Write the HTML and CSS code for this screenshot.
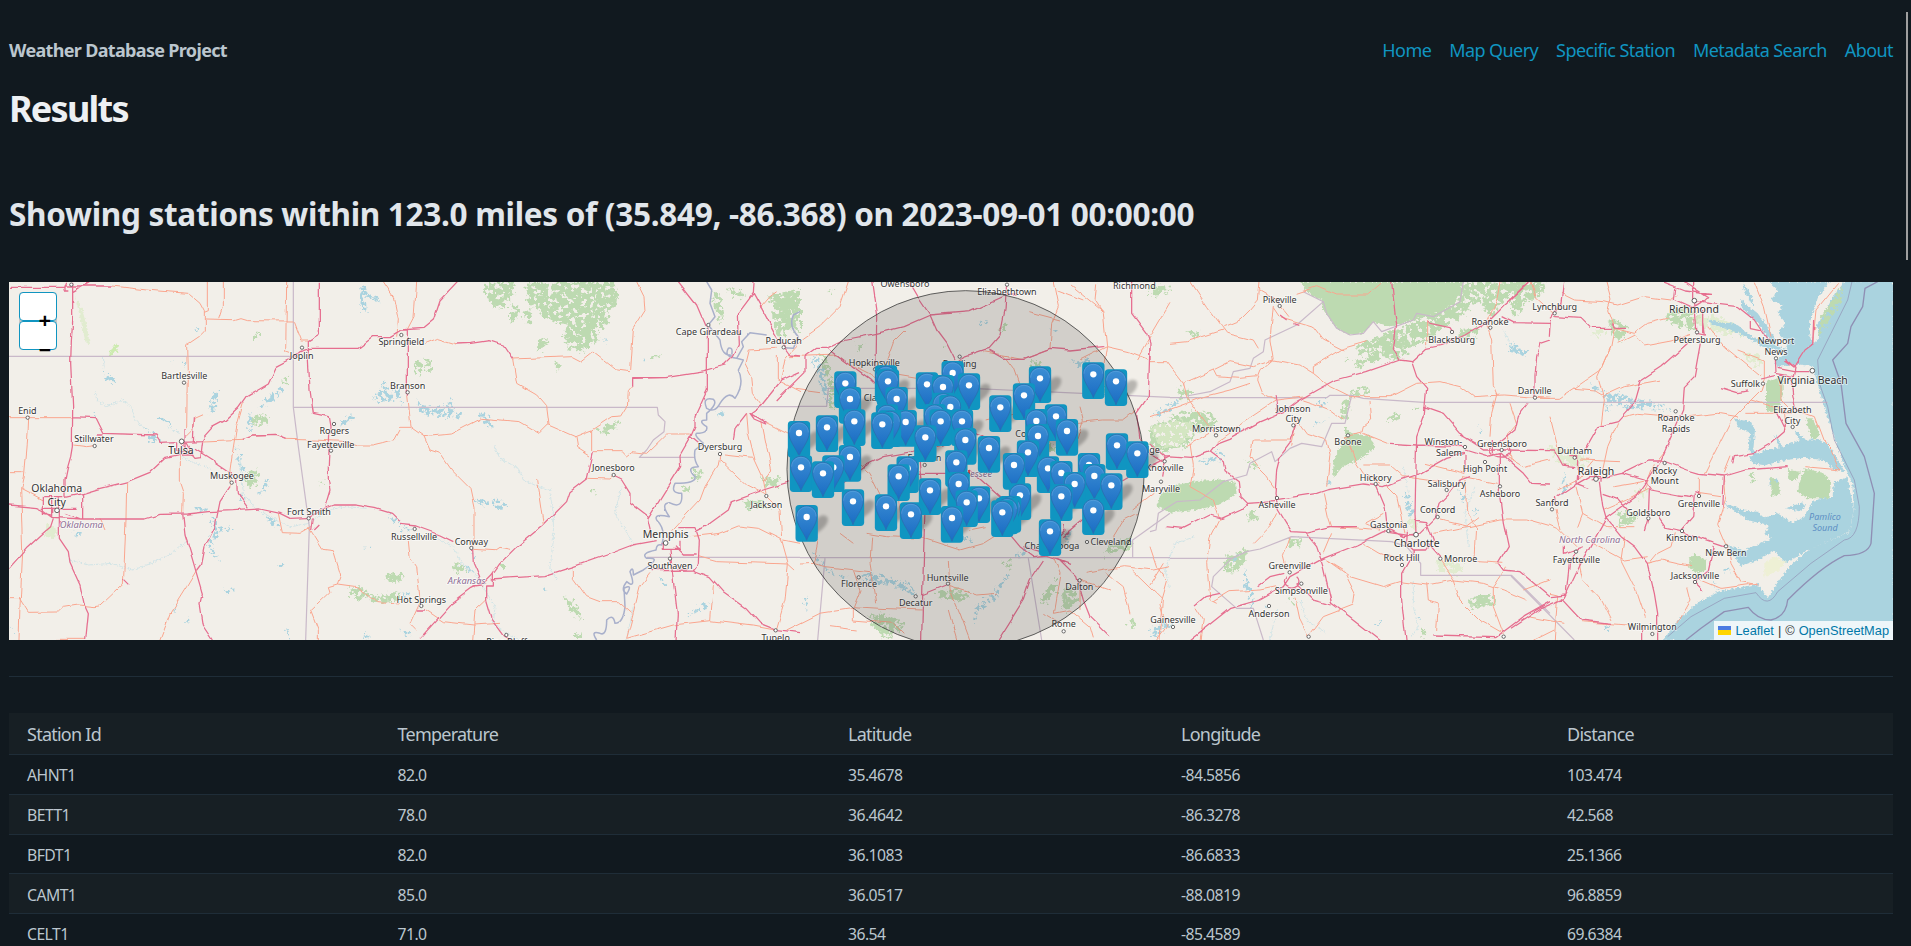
FILE: index.html
```html
<!DOCTYPE html>
<html lang="en">
<head>
<meta charset="utf-8">
<title>Weather Database Project</title>
<link rel="stylesheet" href="styles.css">
</head>
<body>
<nav class="nav">
  <strong class="brand">Weather Database Project</strong>
  <ul class="links">
    <li><a href="#">Home</a></li><li><a href="#">Map Query</a></li><li><a href="#">Specific Station</a></li><li><a href="#">Metadata Search</a></li><li><a href="#">About</a></li>
  </ul>
</nav>
<h1 class="title">Results</h1>
<h2 class="subtitle">Showing stations within 123.0 miles of (35.849, -86.368) on 2023-09-01 00:00:00</h2>
<div class="map">
<svg class="tiles" viewBox="9 282 1884 358" width="1884" height="358">
<defs>
  <filter id="rag" x="-5%" y="-5%" width="110%" height="110%"><feTurbulence type="fractalNoise" baseFrequency="0.13" numOctaves="3" seed="4"/><feDisplacementMap in="SourceGraphic" scale="15" xChannelSelector="R" yChannelSelector="G"/></filter>
  <filter id="veg" x="-5%" y="-5%" width="110%" height="110%"><feTurbulence type="fractalNoise" baseFrequency="0.07" numOctaves="4" seed="4" result="n"/><feDisplacementMap in="SourceGraphic" in2="n" scale="34" xChannelSelector="R" yChannelSelector="G" result="d"/><feColorMatrix in="n" values="0 0 0 0 0  0 0 0 0 0  0 0 0 0 0  0 0 14 0 -5.1"/><feComposite in="d" operator="in"/></filter>
  <filter id="lake" x="-5%" y="-5%" width="110%" height="110%"><feTurbulence type="fractalNoise" baseFrequency="0.09" numOctaves="3" seed="12" result="n"/><feDisplacementMap in="SourceGraphic" in2="n" scale="26" xChannelSelector="R" yChannelSelector="G" result="d"/><feColorMatrix in="n" values="0 0 0 0 0  0 0 0 0 0  0 0 0 0 0  0 0 12 0 -5.3"/><feComposite in="d" operator="in"/></filter>
  <filter id="wig" x="-5%" y="-5%" width="110%" height="110%"><feTurbulence type="fractalNoise" baseFrequency="0.06" numOctaves="2" seed="9"/><feDisplacementMap in="SourceGraphic" scale="5" xChannelSelector="R" yChannelSelector="G"/></filter>
  <filter id="blur"><feGaussianBlur stdDeviation="5"/></filter>
  <linearGradient id="pinfill" x1="0" y1="0" x2="0" y2="1"><stop offset="0" stop-color="#3d8fd4"/><stop offset="1" stop-color="#1a6cc4"/></linearGradient>
  <g id="s"><path d="M0,70 L22,15 Q45,-15 62,0 Q70,20 40,42 Z" fill="#000" opacity=".24" filter="url(#blur)"/></g>
  <g id="p"><rect x="-33.5" y="-36" width="67" height="110" rx="11" fill="#1095c1"/><path d="M0,70 C-5,52 -31,22 -31,-1 C-31,-20 -17,-33 0,-33 C17,-33 31,-20 31,-1 C31,22 5,52 0,70 Z" fill="url(#pinfill)" stroke="#2a6fb0" stroke-width="2.5"/><path d="M-28,-2 C-28,-19 -15,-30 0,-30 C15,-30 28,-19 28,-2" fill="none" stroke="#6fb2e4" stroke-opacity=".6" stroke-width="2"/><circle r="9.5" fill="#fff"/></g>
  <circle id="t" r="5" fill="#fff" stroke="#555" stroke-width="2.6"/>
  <circle id="c" r="7" fill="#fff" stroke="#555" stroke-width="2.8"/>
</defs>
<rect x="9" y="282" width="1884" height="358" fill="#f2efe9"/>

<!-- Land cover and lakes -->
<g transform="translate(0 280) scale(.33333)">
  <g class="green" filter="url(#veg)"><path d="M325,215 l20,-20 12,5 -10,22 -20,5z" fill="#cdebb0"/><path d="M765,155h12v22h-12zM750,415 l40,-12 20,15 -5,14 -50,-2zM735,580 l35,-12 5,45 -35,5zM845,300l22,-10v20h-16zM960,610l14,-12 2,14zM1160,885 l45,-5v25h-45zM1045,925 l50,0 25,25 80,-10v25l-80,0 -15,-15 -40,10z"/></g>
  <g class="pale" filter="url(#rag)"><path d="M225,50 l20,35 15,50 10,60 -14,-10 -15,-70zM140,730 l30,20 -5,25 -30,-5z"/></g>
  <g class="lake" filter="url(#lake)"><path d="M1085,15 l10,0 5,80 -20,0zM1092,30 l50,30 -3,8 -52,-22zM310,265l12,20 25,10 -10,18 -20,-8zM640,335 l18,0 -10,50 -20,15 -5,-10zM480,410l38,20v8l-38,-18zM810,345 l45,-30v12l-35,38 -45,20zM745,400l10,0 0,60 -10,-5zM710,500 l14,20 -8,25 22,25 -15,0 -10,-20zM585,685 h45 l-10,12 -30,-4zM625,705 l15,10 15,30 35,-10 5,8 -40,18 -20,40 22,40 -20,-12 -15,-40 20,-35zM790,705 l40,15 10,15 -15,5 -25,-20zM775,645 l25,-50 8,0 -20,45zM668,930 l20,-2 15,-5 0,14 -25,3zM520,990 l10,-18 -4,26zM562,1010h8v20h-8zM430,440l30,20 30,20 -35,10 -15,-10 15,-10zM510,240l12,8 -6,4zM548,240l8,20 -6,4zM27,1035l16,22 -8,0zM220,758h22v10h-18zM280,395l15,10 -12,4zM1140,330 l15,-30 10,35 35,-10v30l-70,15 -10,-12zM1020,420l40,-20 8,10 -35,28 -10,0zM1165,700l20,20 15,0v15l-25,-5zM1090,800h24l-6,6zM830,852h24l-8,8zM860,1040l8,20 -4,20h-6zM1090,1060h15v18h-13zM585,145h12v8h-10zM720,640l15,15 -15,4z"/></g>
  <g class="river" filter="url(#rag)"><path d="M285,330 l5,30 30,20 45,-20 30,20 10,40 25,20 M205,840 l60,15 70,-5 60,20 60,-20 60,-30 50,-40 M545,530 l40,20 45,15 M720,540 l10,100 40,50 40,20 60,30 60,-10 50,-40 60,-10 60,5 M310,230 l3,40 M500,440l40,20"/></g>
</g>
<g transform="translate(400 280) scale(.33333)">
  <g class="green" filter="url(#veg)"><path d="M250,5 l95,0 -5,40 -25,40 -30,-5 -30,-35zM375,5 H640 L655,40 650,75 625,90 630,130 600,145 590,190 545,215 510,205 485,170 500,140 430,110 415,90 385,65zM330,75 l25,5 -5,40 -20,5zM370,95l25,-10 -5,45 -15,0zM415,180l30,-5 -15,35 -20,0zM40,250 l20,-10 5,30 -15,20zM75,235 l18,5 0,35 -15,0zM465,245l18,12 -8,12 -12,-8zM750,235l30,-20 -10,22 -12,6zM590,450 l70,-28 -10,20 -45,20zM575,630l12,-10 -4,22zM160,850 l30,5 15,20 -35,5zM300,855h15v15h-10zM490,950 l40,20 15,45 -18,-5zM525,1060h25v20h-25zM845,625l25,-5 -10,18zM880,565l25,10 -10,26 -15,-6zM940,30 l25,20 8,60 -20,20 -12,-50zM985,25 l50,10 -5,20 -40,-5zM1100,50 l100,-20 v130 l-40,-15 -15,-60zM1085,595l60,0 -10,20 -40,8zM1030,660 l60,8 20,18 -70,5zM0,880l8,0v30h-8z"/></g>
  <g class="lake" filter="url(#lake)"><path d="M50,360 l20,16 60,8 25,-30 8,40 30,12 -20,10 -60,-6 -55,-14zM240,395l30,10 5,45 -12,-10 -20,-20zM725,225l15,20 -10,4zM610,175l12,5 -8,8zM220,658 l40,5 30,-10 25,15 10,12 -30,8 -15,-12 -50,-5zM860,1005 l50,-35 20,-5 -10,18 -55,28zM950,400l22,-8 -15,28 -6,-3zM780,890l22,25 -15,0zM220,820 l12,10 -10,18zM0,350l12,10 -8,12zM0,940l30,0 -10,12zM0,1045l30,12 10,10 -30,-4zM175,850l30,12 20,20zM0,738 l30,5 0,8h-30zM430,920l14,12 -14,4z"/></g>
  <g class="river" filter="url(#rag)"><path d="M280,495 l20,40 55,30 15,35 45,20 40,10 M100,770 l60,30 25,50 40,30 30,50 30,50 -5,50 40,30 60,30 M450,640 l10,60 0,80 -10,80 20,40 M680,1080 l20,-100 M700,790 l-55,-90 20,-80"/></g>
</g>
<g transform="translate(770 280) scale(.33333)">
  <g class="green" filter="url(#veg)"><path d="M10,40 l60,-5 15,50 -25,50 -25,40 -25,-30zM150,215 l20,20 20,90 0,60 -14,0 5,-60 -20,-60zM260,190l20,-5 -5,30 -12,-5zM780,240 l30,5 -5,35 -20,-4zM995,320l35,5 0,25 -30,-5zM830,930 l25,-35 0,40 -35,40 -12,-10zM880,930 l25,-15 20,35 -35,50 -10,-15zM300,1010 l45,-10 60,30 -25,35 -40,10 -30,-35zM1010,800 l75,-30 0,30 -80,30zM700,840l28,5 -5,25 -20,-10zM500,940 l60,-15 40,25 -30,15 -60,-10zM1070,1020l25,0 -10,30zM175,35l15,-5 -5,15zM520,195l8,10 -8,5zM690,150l18,-25 0,30zM820,500l35,-15 0,30 -25,10z"/></g>
  <g class="lake" filter="url(#lake)"><path d="M120,225 l25,5 20,60 15,80 -12,0 -20,-70zM270,890 l40,-12 50,15 50,15 30,30 -10,8 -60,-25 -95,-20zM130,810 l30,40 30,30 50,10 -8,8 -60,-20 -40,-50zM600,1035 l20,-55 50,-45 40,-50 8,6 -40,60 -48,40zM620,120l35,5 -20,12zM840,140l30,15 -10,10zM900,240 l40,5 20,-20 0,30 -30,5zM730,830l40,-30 30,-10 -30,30 -30,15zM880,770l20,-25 8,10 -20,30zM560,760l50,20 -10,8zM100,960l12,-20 0,60zM470,350l20,10 -15,5z"/></g>
</g>
<g transform="translate(1150 280) scale(.33333)">
  <g class="green" filter="url(#rag)"><path d="M450,5 H940 L925,50 870,95 800,120 720,140 670,125 640,160 600,165 560,145 520,90 515,60 480,45z"/></g>
  <g class="green" filter="url(#veg)"><path d="M950,5H1115L1060,70 1020,110 985,60 930,110 840,175 780,205 740,240 700,235 620,265 610,250 680,215 620,225 630,190 700,165 730,150 830,115 890,70zM930,155l60,-10 -10,20 -60,10zM600,335 l55,-15 0,20 -50,12zM575,370 l28,-25 -10,70 -20,5zM0,440 l90,-40 40,-10 60,10 10,40 -60,20 -30,40 -80,20 -30,-30z"/><path d="M705,415 l45,-15 0,15 -35,12zM790,380h12v10h-12zM225,830l65,-25 0,35 -40,40 -25,0zM415,775l35,0 5,20 -40,5zM110,150 l35,5 -5,18 -20,-4zM580,235l20,0 -8,10zM285,540l45,5 -10,25zM290,700l22,-5 12,22 -30,5zM965,955 l60,-12 10,30 -60,15 -25,-25zM80,325l40,5 0,35 -30,-10z M810,1040l20,15 -15,20zM410,950l30,20 -5,10z M0,15 l55,5 0,20 -55,10z"/></g>
  <g class="green" filter="url(#rag)"><path d="M30,645 l50,-30 60,-12 80,-5 35,10 5,35 -50,30 -60,15 -90,10 -40,-20zM585,440 l15,18 60,10 15,35 -45,35 -50,20 -30,35 0,-50 15,-30 20,-40z"/></g>
  <g class="pale" filter="url(#veg)"><path d="M0,440 l90,-20 60,20 -60,60 -60,0zM860,840l90,5 -30,40 -60,-10zM770,720l30,-5 10,30 -40,0z"/></g>
  <g class="lake" filter="url(#lake)"><path d="M765,635 l15,15 10,50 -15,10 -10,-30zM925,630l20,20 10,-8 -18,30zM965,690 l20,-10 -8,28zM140,545 l50,-15 20,-20 10,15 -50,30zM190,500l20,30 0,20zM10,400 l70,-40 10,10 -60,40zM0,1050 l60,-30 10,12 -65,45zM1070,185 l40,25 30,0 -15,15 -40,-8zM285,860 l12,50 15,30 -5,50 -12,-40 -15,-30zM340,970l20,15 -10,4zM670,1030l22,-10 -6,25zM500,430l40,-15 -50,25zM520,600l35,8 -30,8zM785,980l10,30 18,12 -14,-1zM500,370 l40,-12 -25,25zM985,435l12,10 -6,15zM245,835l20,-15 -10,25z"/></g>
  <g class="river" filter="url(#rag)"><path d="M790,900 l0,80 15,60 -20,30 M60,930 l-15,-60 30,-80 60,-20 M975,620 l-30,80 10,100 M360,1080 l20,-90 M450,960 l20,60 60,40 M1060,150 l30,60 M760,560l15,80"/></g>
</g>
<g transform="translate(1511 280) scale(.33333)">
  <g class="green" filter="url(#veg)"><path d="M0,5 H110 L90,45 40,70 25,105 0,95zM465,110 l30,-30 50,5 25,40 -20,20 -60,-5zM290,125 l35,-5 25,25 -15,40 -30,-15zM320,700 l35,-8 25,20 -25,25 -35,0z"/></g>
  <g class="green" filter="url(#rag)"><path d="M535,835 l15,-15 35,20 0,30 -30,10 -20,-20z"/></g>
  <g class="pale" filter="url(#veg)"><path d="M245,150h40v18h-40zM110,500 l80,10 50,40 -30,20 -70,-20zM700,215l50,10 0,35 -40,-15zM370,620l40,10 -20,30zM540,100l100,15 70,50 -60,0 -90,-30z"/></g>
  <g class="lake" filter="url(#rag)">
    <path d="M775,5 L800,30 780,60 815,75 800,100 825,130 800,160 830,190 815,230 790,240 800,262 850,252 905,258 925,330 945,400 970,470 1000,560 1024,610 1028,690 1015,757 960,780 900,805 840,855 790,920 770,955 740,912 620,935 560,970 500,1020 455,1082 H1148 V3Z"/>
    <path d="M725,550 l-10,-20 50,-20 50,-10 50,-20 50,-2 30,10 20,25 35,60 -30,-2 -30,-30 -60,-8 -60,8 -60,15z"/>
    <path d="M1010,590 L968,608 965,650 905,662 880,712 840,728 800,700 760,715 740,695 700,692 640,668 650,682 690,705 715,722 775,735 760,760 780,775 700,812 650,795 665,822 690,858 740,840 790,812 825,850 880,815 960,780 1015,755 1028,690Z"/>
    <path d="M590,118 l25,8 60,5 50,40 60,20 40,20 -10,4 -60,-15 -65,-38 -50,-18 -35,-10zM690,60l50,40 50,70 10,50 -20,-30 -40,-60 -50,-50zM695,5 l25,40 10,30 -8,0 -20,-40zM720,425 l12,25 -5,60 30,25 -20,0 -25,-25 5,-50 -30,-15 -20,-30zM850,450l35,30 25,35 -25,-10 -30,-40zM790,460l25,40 -12,0zM775,595l28,5 -5,20 -22,-5zM825,685l50,-18 10,12 -20,15z"/></g>
  <g class="lake" filter="url(#lake)"><path d="M280,340 l50,0 40,20 50,5 70,25 -70,-2 -60,0 -50,-15 -25,20zM240,315l30,12 20,12 -40,-8zM0,185l40,25 -10,8 -30,-5zM160,580l8,40 -15,25 -6,-10zM275,1035l20,5 -8,15zM640,860h15v15h-15zM605,900l20,25 -15,0z"/></g>
  <path d="M955,5 L920,55 898,120 895,165 905,192 925,175 918,135 945,95 960,60 1000,5Z" fill="#f2efe9" filter="url(#rag)"/>
  <g class="green" filter="url(#rag)"><path d="M765,305 l50,-15 0,55 -15,50 -35,0zM885,415 l20,0 20,40 -5,20 -20,0zM880,565 l60,15 20,30 -5,45 -65,0 -30,-20 10,-40zM780,590l22,20 5,30 -25,10zM830,570l40,5 -15,25 -20,0z"/></g>
  <g class="green" filter="url(#veg)"><path d="M715,580 l25,15 -20,15zM920,170l10,-60 40,-60 25,-30 -5,40 -30,60z"/></g>
  <path d="M760,850 l30,-20 35,15 -20,25 -45,20z" fill="#eef0d5" filter="url(#rag)"/>
</g>

<!-- State and maritime boundaries -->
<g class="border">
  <path transform="translate(0 280) scale(.33333)" d="M27,229 H880 M880,5 V382 H1200 M880,382 L895,500 928,740 917,1080"/>
  <path transform="translate(400 280) scale(.33333)" d="M0,382 H772 L775,405 795,425 792,455 760,480 740,510 718,532 H882 M955,380 H1200 M740,832 H1200"/>
  <path transform="translate(770 280) scale(.33333)" d="M90,379 H170 L175,325 H600 L1200,352 M90,833 H1200 M165,835 L143,1080 M775,835 L815,1080 M1088,835 V780 L1130,750 1200,700"/>
  <path transform="translate(1150 280) scale(.33333)" d="M60,353 H530 L540,346 H605 L640,355 820,367 H1200 M605,346 L585,430 545,430 515,500 455,490 420,505 375,545 365,515 300,550 290,585 220,605 150,660 80,665 25,700 18,750 0,755 M110,348 L180,335 240,305 250,275 300,265 310,235 340,215 345,180 440,135 520,65 460,35 M520,65 L530,100 560,145 600,165 640,160 670,125 695,155 790,120 800,100 850,110 930,65 940,5 M60,835 H245 L290,815 330,807 425,770 725,785 M245,835 L190,890 185,920 260,985 310,985 340,1080 M725,785 L770,800 812,850 V886 H1085 L1200,1000"/>
  <path transform="translate(1511 280) scale(.33333)" d="M117,367 H950 M0,888 L190,1080"/>
</g>
<g class="sea" transform="translate(1511 280) scale(.33333)"><path d="M1100,5 L1062,25 1055,80 1020,140 1010,190 965,240 990,310 1005,430 1060,530 1090,640 1080,790 Q1070,825 1000,827 Q930,860 830,960 Q825,1010 780,1020 Q740,1020 712,982 L640,995 570,1045 525,1080" stroke-width="4"/><path d="M1023,5 L1010,60 960,160 920,240 925,310 950,380 970,480 1030,600 1045,680 Q1045,775 1000,780 L900,850 800,935 Q770,990 735,938 L640,955 540,1010 470,1070" stroke-width="2"/></g>
<g class="missriver" transform="translate(400 280) scale(.33333)" filter="url(#wig)"><path d="M920,5 L935,30 930,70 945,110 925,135 960,180 Q965,230 995,225 Q1000,200 985,205 Q970,230 1010,235 L1030,200 1025,185 1050,158 1100,165 M1010,235 L1030,240 1015,270 Q1035,310 1005,355 Q985,330 960,370 Q945,400 920,385 Q905,350 940,358 Q955,370 920,400 V420 Q890,420 920,440 Q925,460 890,460 Q880,465 910,490 L885,510 Q880,540 895,560 Q855,560 885,590 Q890,610 825,610 Q810,640 845,640 Q850,690 808,668 Q780,670 808,710 Q760,700 770,720 Q800,750 785,795 Q770,790 768,810 Q720,820 740,835 Q790,830 730,870 L700,885 Q700,855 690,875 Q710,930 680,905 Q660,930 680,942 Q700,910 672,925 L675,980 Q670,1030 645,1030 Q640,1000 620,1020 Q620,1070 600,1060 Q570,1050 590,1080"/><path d="M1200,95 L1180,105 Q1165,140 1195,170 L1180,205 1150,203"/></g>

<!-- Secondary highways -->
<g class="trunk" filter="url(#wig)">
  <path transform="translate(0 280) scale(.33333)" d="M335,18 L440,30 565,40 600,70 613,95 V157 L600,170 560,197 562,280 560,450 M625,5 V95 L613,100 M670,5 V80 L658,118 M613,120 L700,122 720,116 740,122 880,123 M860,5 L857,215 870,220 M882,123 L905,183 925,183 M27,413 H215 M83,413 L80,480 70,590 62,625 68,815 60,980 57,1080 M27,575 H68 M27,953 H57 L85,997 175,996 190,982 235,975 285,980 300,978 370,912 372,870 378,720 380,605 M62,625 L130,660 M175,1078H257 M610,483 L725,478 760,468 830,466 860,478 940,480 1050,485 1075,495 1120,495 1150,488 1185,478 1200,450 M730,370 L710,440 697,520 690,570 690,620 M538,525 V605 L550,640 548,700 M590,870 L560,920 510,1000 480,1080 M560,470 L580,450 585,415 612,403 M925,740 L968,808 1000,812 1022,885 1012,912 985,920 990,935 932,990 955,1050 955,1080 M1012,912 L1070,920 1130,968 1200,972 M835,700 L847,758 900,760 935,740 M1150,5 L1180,50 1195,120 1190,170 M220,495 L260,500 285,497 M300,715l15,35"/>
  <path transform="translate(400 280) scale(.33333)" d="M50,5 L42,110 22,148 M75,190 L110,175 165,192 M338,237 L520,230 545,243 580,215 650,270 690,275 M710,5 L732,50 735,95 700,150 692,270 M698,320 L685,335 682,380 665,408 635,410 575,450 525,470 445,435 420,460 360,425 245,415 155,462 72,470 M338,237 L350,310 410,345 440,380 447,435 M20,350 L30,440 72,470 90,510 120,520 155,570 210,625 222,680 222,800 M0,442H30 M575,450 V510 M525,470 L530,500 570,525 M580,512 L670,512 682,525 695,515 740,520 800,462 872,462 M220,808 L285,812 300,802 330,808 M410,600 L430,735 M565,595 L630,597 640,588 M25,780 L30,830 50,860 60,960 M78,990 L130,1025 220,1035 300,1030 M257,960 L225,990 218,1080 M520,860 L520,895 560,950 600,965 655,965 695,1000 M750,880 L720,920 700,1000 680,1075 L750,1055 820,1035 930,1022 1060,1038 1125,1050 M940,915 L932,1022 M895,830 L950,845 1165,852 1185,870 M870,770 L960,760 1015,738 1075,745 1145,780 1165,852 1155,960 1130,1045 M1145,780 L1140,690 1098,648 M960,522 L955,555 915,620 900,660 815,752 M972,525 L1060,535 1090,600 1098,640 M960,540 L1040,615 1098,645 M1040,400 L1045,460 1065,540 M1085,425 L1100,500 1115,570 1090,605 M1100,430 L1160,460 1200,480 M1130,205 L1045,210 1035,250 1055,290 1060,340 1085,375 M1132,225 V300 L1200,335 M1080,85 L1110,50 1130,35 M1150,780 L1200,790 M60,965 L30,1030 50,1050"/>
  <path transform="translate(770 280) scale(.33333)" d="M75,325 L150,335 M235,5 L210,80 150,140 100,175 45,235 30,310 M60,230 L200,225 230,250 330,300 M405,150 L370,185 350,240 M350,280 L470,300 M700,225 L730,265 760,350 M640,215 L760,235 840,205 M850,5 L865,80 845,130 840,205 M775,95 L870,120 M980,10 L975,60 1000,100 1010,200 990,330 M900,15 L1000,95 M1010,200 L1075,215 1140,240 M930,380 L940,420 920,480 M1100,390 L1060,420 1000,420 900,430 M650,420 L730,400 M90,852 L130,850 165,860 300,875 M250,790 L210,760 M250,870 L270,930 250,980 330,985 455,990 M145,780 L130,850 M305,770 L300,850 320,970 M290,760 L350,770 460,775 L570,810 640,790 720,740 M535,840 L540,930 570,1000 600,1080 M540,920 L620,945 680,940 M50,1050 L150,1000 250,985 L250,1020 370,1030 400,1060 M180,1040 L260,1050 M850,830 L870,880 850,1000 900,990 960,1040 970,1075 M950,880 L1060,860 1150,870 1200,860 M930,990 L930,900 1020,930 M1010,880 L1060,920 1080,1000 M1088,870 L1180,960 1170,1080 M1085,690 L1150,640 M1100,700 L1060,720 1030,770 M1200,70 L1100,240 M1010,200L930,240 M860,30 L940,60 M600,750 L650,740 M380,620 L400,760 M250,540 L300,580 340,660 M820,1000 L880,1035 M560,1080 L535,990"/>
  <path transform="translate(1150 280) scale(.33333)" d="M120,5 L170,80 215,140 230,160 310,180 325,205 M330,5 L325,60 300,90 270,120 220,140 M330,30 L380,60 420,110 M370,80 L390,110 490,140 520,180 580,210 M60,190 L110,185 220,150 M370,75 L360,180 370,240 330,275 320,300 335,340 375,360 M100,310 L190,270 240,245 310,260 370,240 450,255 490,280 540,320 600,350 M190,270 L200,290 270,295 320,290 M0,245 L50,245 100,310 110,350 160,420 200,470 M0,410 L110,370 160,350 240,330 300,310 M200,485 L290,420 380,360 470,350 M110,500 L180,460 M490,280 L490,260 540,230 580,205 650,185 M440,40 L500,20 560,45 650,45 690,10 M600,350 L660,350 720,350 800,310 870,305 930,320 970,350 1060,345 1200,355 M660,360 L665,420 640,440 635,460 580,470 M640,460 L715,490 M580,470 L600,500 620,550 640,580 690,610 M460,360 L490,370 540,390 580,420 M425,500 L440,420 470,460 530,480 L540,520 530,620 M420,480 L310,480 300,530 320,560 350,590 375,625 M830,120 L830,200 M1050,5 L1040,60 1010,130 1025,180 1030,320 1040,345 1025,400 1020,470 M640,555 L720,555 760,590 870,605 M520,640 L535,710 545,740 M545,760 L520,820 M420,770 L400,830 410,870 M380,700 L360,740 310,790 M205,720 L180,770 170,850 180,960 200,970 M120,490 L130,560 120,620 190,660 210,720 M20,860 L50,900 30,970 50,1040 20,1080 M135,980 L160,1020 150,1080 M0,800 L20,860 M190,965 L240,935 330,930 380,920 M435,950 L450,1020 475,1070 520,1010 610,975 615,940 580,870 530,840 M530,840 L600,890 700,920 750,905 830,915 910,900 1000,910 1060,930 1130,960 M640,790 L690,820 750,840 M545,740 L640,745 690,750 L645,730 700,700 M710,620 L740,650 765,760 M940,590 L1040,610 M940,590 L900,640 M870,720 L960,740 1050,720 1130,720 1200,740 M850,760 L950,740 990,710 M945,600 L950,690 980,740 975,840 M870,840 L910,900 930,960 990,1020 1060,1060 M830,910 L835,960 865,970 860,1050 M985,845 L1060,850 M1070,860 L1030,920 1030,980 1060,1060 M1200,900 L1120,930 M1080,370 L1100,430 1075,460 1080,540 M1200,540 L1120,560 1070,530 M825,550 L945,580 M0,915 L40,850"/>
  <path transform="translate(1511 280) scale(.33333)" d="M60,5 L75,50 130,100 M150,40 L190,60 280,65 320,75 400,50 480,60 500,45 M285,5 L300,60 290,90 310,145 300,200 270,270 190,325 145,355 72,355 M190,325 L250,330 275,345 M310,145 L370,160 410,130 470,115 M320,190 L370,165 400,195 480,180 540,160 M590,140 L640,200 750,290 M730,5 L760,80 780,170 M680,210 L760,240 760,300 750,330 700,380 660,420 600,540 580,580 M340,410 L380,400 490,410 M530,410 L620,400 680,410 M700,400 L760,400 840,400 M275,350 L340,320 450,300 M300,200 L260,290 280,360 270,440 M320,430 L290,500 275,570 M460,515 L440,540 M140,630 L200,600 250,540 M210,540 L330,545 M415,625 L350,660 280,690 M430,550 L400,630 M117,410 L145,520 M117,735 L140,745 195,800 M135,690 L150,750 M195,620 L215,700 200,740 M215,700 L285,740 370,740 M340,770 L330,840 370,920 400,1010 M490,760 L480,800 440,820 415,850 M410,850 L450,840 540,860 M200,830 L215,900 270,960 300,1020 M230,780 L340,840 410,830 M530,920 L540,960 500,1030 M640,590 L645,650 620,730 650,800 660,850 690,905 745,915 M560,640 L630,650 M565,590V640 M570,900 L630,925 740,910 M720,360 L820,390 825,450 M810,300 V360 L850,400 M980,10 L915,90 905,190 M855,390 L910,410 940,490 960,510 980,560 990,570 L880,560 M640,580 L660,530 M117,940 L140,945 130,1080 M50,1010 L160,1030 M70,1080 L130,1050 M210,1025 L350,1035 M310,620 L370,610 410,600"/>
</g>

<!-- Motorways -->
<g class="mway" filter="url(#wig)">
  <path transform="translate(0 280) scale(.33333)" d="M30,22 H195 L200,8 M205,30H195V18H335 M218,35 L265,8 M218,5 V125 L214,180 212,250 218,380 217,500 212,530 202,565 195,600 195,650 M218,410 L285,413 308,460 468,465 483,487 530,485 M290,465h18 M195,652 L250,640 300,625 382,605 450,577 495,535 545,525 H580 L555,480 M545,484 L610,482 M545,490 L585,535 602,533 608,482 612,470 637,442 675,422 715,385 740,350 805,312 828,262 870,240 900,215 930,205 1075,205 1120,170 1170,170 1200,152 M725,478L760,468 830,466 860,478 M583,415 L580,485 M555,450V500 M958,5 V165 L925,185 V240 L930,330 940,400 985,410 990,440 985,560 985,600 990,630 975,680 M27,675 L110,683 125,690 155,712 245,717 435,717 480,703 560,702 625,695 700,692 780,687 840,700 870,715 925,713 960,690 1000,675 1060,675 1125,685 1175,700 1200,725 M160,715 L152,740 120,768 85,800 27,865 M178,690 V775 L205,815 210,850 240,915 252,970 265,998 257,1080 M248,640 V715 M548,700 L555,765 575,830 607,940 600,970 610,1035 640,1080 M690,620 L660,665 645,740 615,800 605,850 590,870 M585,505 L640,540 645,550 690,580 710,600 712,640 745,685 M130,650 V700 L155,705 M130,650 H190 M155,650V712 M178,650V715 M125,685H230 M195,700L240,717 M530,485 V515 H560 M370,895l18,18 M943,750l15,-15 M940,715L935,750"/>
  <path transform="translate(400 280) scale(.33333)" d="M172,5 L120,60 100,120 70,145 0,150 M22,148 V350 M165,192 L215,190 270,182 310,195 338,237 M698,320 V290 L800,290 915,272 975,255 1000,230 1018,195 1015,100 1060,40 1062,5 M1060,40 L1085,85 1130,170 1170,225 1200,228 M835,5 L890,75 922,150 V330 L885,410 885,440 872,470 840,525 842,560 745,715 M872,470L895,490 M580,512 L562,595 510,635 500,665 430,735 345,805 300,850 275,885 255,905 215,925 155,970 60,1075 M640,588 L665,600 690,640 690,670 745,712 742,725 M742,715L755,770 M275,897 L435,887 520,860 620,825 700,795 770,782 M0,733 L45,738 120,765 160,785 M218,808 L220,850 238,890 245,915 220,918 M280,880V915H257 V960 L275,1020 310,1068 330,1080 M75,990H50 M810,810 L820,900 832,1000 828,1080 M835,740 L885,740 898,780 895,850 L880,870 755,872 M790,790 V808 H840 V785 M825,800 L850,825 890,825 M880,870 L930,890 970,935 1040,985 1080,1030 1125,1048 1200,1058 M885,755 L930,730 985,690 995,665 1090,630 1170,605 M800,290l-100,2 M1200,275 L1145,300 1085,375 1050,400 1100,430 M1040,400 L1005,445 1000,480 M1050,400L1065,420 1100,435 1090,420"/>
  <path transform="translate(770 280) scale(.33333)" d="M105,230 L140,205 170,205 220,180 320,160 400,140 480,105 600,95 710,45 H740 M305,5 L320,110 318,280 M105,230 V275 L20,360 M418,5 L450,60 480,105 500,150 530,190 555,240 M710,10 L705,90 690,165 655,205 580,230 555,250 M655,210 L700,235 760,235 840,205 900,210 1000,200 M1085,5 L1085,100 1130,160 1140,190 1135,350 1100,400 1110,480 1140,520 M170,205L300,300 340,340 M200,620 L290,555 340,530 450,510 540,490 600,455 690,490 M450,540 L465,680 460,850 455,1080 M455,945 L530,915 M600,570 L700,660 740,690 M700,740 L750,800 790,830 830,825 870,840 890,860 M820,840 L780,900 760,960 685,1080 M870,840 L920,890 940,960 960,1010 1020,1070 M880,770 L940,720 M850,790 L885,750 880,730 M1060,600 L1110,570 1140,560 1200,530 M1140,520 L1180,545 M440,580H530 M760,800L830,820 M860,835L900,850"/>
  <path transform="translate(1150 280) scale(.33333)" d="M725,5 L735,100 740,130 730,210 750,240 785,245 800,290 830,325 822,410 800,470 795,700 798,760 M750,240 L650,275 555,300 500,330 440,365 400,395 330,425 240,475 200,490 180,515 125,535 45,530 0,490 M180,515 L220,545 225,575 265,605 270,650 290,670 L375,665 M440,435 L420,490 390,530 380,570 375,640 385,690 425,755 465,757 500,800 520,860 545,970 600,1010 690,1080 M465,757 540,740 620,740 M785,245 L830,205 880,195 945,165 1020,120 1065,75 1140,8 M830,125 L900,140 910,155 M1055,110 L1090,128 1200,130 M1200,180 L1170,190 1160,230 1155,290 1155,350 M1135,370 L1105,410 1095,450 1040,495 M530,630 L640,612 700,620 750,600 810,580 890,535 945,520 M375,660 L500,640 530,630 M680,620 L705,680 712,745 L760,770 800,765 M0,200V240 M720,490 L800,495 L945,500 M822,380 L880,400 940,470 1000,510 1060,510 1200,512 M930,465 L975,490 M945,510 L1010,530 1050,520 1120,580 1145,610 1200,612 M1030,480 V520 M1025,500 a30,20 0 1 0 50,0 M1048,520 V640 L1060,730 1075,800 1045,850 1060,870 1110,875 1140,900 1200,950 M945,525V580 M960,590 L930,600 900,640 870,670 860,710 830,740 800,770 L700,755 620,795 520,835 L420,890 400,920 330,960 240,985 120,1080 M790,720 L830,725 850,780 830,810 790,810 770,790 772,755 M835,790 L870,830 M795,810 L755,880 755,960 768,1080 M410,890 a22,18 0 1 0 30,0 M400,880 L360,890 320,920 M440,910 L490,960 545,975 M135,975 L165,950 210,940 M215,715 L270,690 290,672 M215,715L180,705 100,745 50,740 M1200,965 L1120,1010 1040,1070 850,1065 M390,105l20,15 M430,128l15,5 M375,345l10,60 M45,530l-10,60"/>
  <path transform="translate(1511 280) scale(.33333)" d="M0,60 L55,5 M117,115 L130,100 150,70 158,5 M130,110 L210,115 240,145 300,145 M118,120 L115,170 M300,130L315,145H345 M455,5 L520,30 600,40 M495,15 L490,60 545,85 570,70 590,50 520,5 M545,5 V60 M550,65 L680,80 730,120 770,180 775,175 M550,60 L558,160 580,165 575,130 M575,90 V160 M568,190 L550,290 520,320 515,390 450,540 410,600 375,650 285,715 L210,850 160,955 90,985 0,1045 M530,190 L450,260 390,300 370,370 320,425 260,440 220,510 M117,510 L130,510 155,555 190,560 M175,530 H200 V600 M200,545 L195,610 L235,625 M245,600 L330,580 410,540 450,540 L530,570 565,580 640,588 700,570 830,560 M330,580 L400,600 420,630 500,645 545,650 M265,605 L275,680 285,715 330,770 370,800 410,855 430,940 440,1000 440,1080 M275,640 L320,655 350,690 M415,630 L412,710 400,750 M140,650 L200,610 235,590 M135,680 L130,650 M440,710 L465,745 510,755 L595,785 640,800 M550,640 L545,710 510,750 M565,640l-15,-5 M640,590 L635,680 M610,800 L595,870 550,905 575,930 M195,815 L175,850 165,945 120,950 M160,800 V820 L215,800 M150,955 L210,1020 300,1030 M793,240 L795,280 850,290 855,265 820,235 M800,265 L850,275 895,275 M840,290 L845,340 855,390 M850,265 L885,210 905,195 908,120 M820,240L850,262 M750,300L795,290 M630,320L680,335 710,330 M825,420 L820,455 780,490 730,520 670,530 665,550 M820,440L800,400 M715,120 V145L760,155 M395,1040V1080 M235,590h35v15"/>
</g>

<!-- Place names -->
<g class="lbl" transform="translate(0 280) scale(.33333)"><use href="#t" x="214" y="14"/><use href="#t" x="552" y="308"/><text x="553" y="296">Bartlesville</text><use href="#t" x="83" y="413"/><text x="82" y="401">Enid</text><use href="#t" x="284" y="498"/><text x="282" y="486">Stillwater</text><use href="#c" x="545" y="484"/><text class="b" x="543" y="521">Tulsa</text><use href="#t" x="695" y="608"/><text x="696" y="597">Muskogee</text><use href="#c" x="171" y="691"/><text class="b" x="170" y="635">Oklahoma</text><text class="b" x="170" y="677">City</text><text class="st" x="244" y="745">Oklahoma</text><use href="#t" x="926" y="715"/><text x="927" y="705">Fort Smith</text><use href="#t" x="906" y="203"/><text x="905" y="237">Joplin</text><use href="#t" x="1002" y="432"/><text x="1003" y="463">Rogers</text><use href="#t" x="993" y="512"/><text x="992" y="503">Fayetteville</text></g>
<g class="lbl" transform="translate(400 280) scale(.33333)"><use href="#t" x="4" y="165"/><text x="4" y="195">Springfield</text><use href="#t" x="23" y="337"/><text x="23" y="326">Branson</text><use href="#t" x="44" y="747"/><text x="42" y="779">Russellville</text><use href="#t" x="214" y="804"/><text x="214" y="795">Conway</text><text class="st" x="200" y="911">Arkansas</text><use href="#t" x="64" y="978"/><text x="64" y="969">Hot Springs</text><use href="#t" x="319" y="1065"/><text x="320" y="1094">Pine Bluff</text><use href="#t" x="641" y="585"/><text x="640" y="574">Jonesboro</text><use href="#t" x="925" y="135"/><text x="926" y="166">Cape Girardeau</text><use href="#t" x="960" y="522"/><text x="960" y="511">Dyersburg</text><use href="#t" x="1099" y="648"/><text x="1099" y="684">Jackson</text><use href="#c" x="797" y="789"/><text class="b" x="797" y="775">Memphis</text><use href="#t" x="810" y="836"/><text x="810" y="867">Southaven</text><use href="#t" x="1127" y="1051"/><text x="1127" y="1083">Tupelo</text></g>
<g class="lbl" transform="translate(770 280) scale(.33333)"><use href="#t" x="41" y="202"/><text x="41" y="192">Paducah</text><text x="405" y="20">Owensboro</text><use href="#t" x="711" y="14"/><text x="711" y="45">Elizabethtown</text><text x="1093" y="28">Richmond</text><use href="#t" x="315" y="268"/><text x="313" y="258">Hopkinsville</text><use href="#t" x="569" y="230"/><text x="569" y="262">Bowling</text><text x="345" y="362">Clarksville</text><use href="#t" x="464" y="555"/><text x="463" y="544">Franklin</text><text x="800" y="472">Cookeville</text><text class="st" x="604" y="591">Tennessee</text><path d="M595,570h4v12h-4z" fill="#e00000" stroke="none"/><use href="#t" x="266" y="892"/><text x="267" y="921">Florence</text><use href="#t" x="437" y="949"/><text x="437" y="979">Decatur</text><use href="#t" x="534" y="911"/><text x="533" y="902">Huntsville</text><use href="#t" x="929" y="901"/><text x="928" y="930">Dalton</text><use href="#t" x="881" y="1054"/><text x="881" y="1042">Rome</text><use href="#t" x="951" y="786"/><text x="1023" y="795">Cleveland</text><text x="846" y="808">Chattanooga</text><use href="#t" x="1184" y="544"/><text x="1184" y="574">Knoxville</text><text x="1105" y="519">Oak Ridge</text><use href="#t" x="1173" y="605"/><text x="1173" y="637">Maryville</text></g>
<g class="lbl" transform="translate(1150 280) scale(.33333)"><use href="#t" x="389" y="78"/><text x="389" y="69">Pikeville</text><use href="#t" x="906" y="156"/><text x="905" y="189">Blacksburg</text><use href="#t" x="1021" y="143"/><text x="1020" y="134">Roanoke</text><use href="#t" x="198" y="466"/><text x="199" y="457">Morristown</text><use href="#t" x="430" y="436"/><text x="430" y="395">Johnson</text><text x="430" y="427">City</text><use href="#t" x="594" y="466"/><text x="594" y="496">Boone</text><use href="#t" x="945" y="501"/><text x="880" y="495">Winston-</text><text x="897" y="527">Salem</text><use href="#t" x="1055" y="510"/><text x="1056" y="500">Greensboro</text><use href="#t" x="1005" y="546"/><text x="1005" y="577">High Point</text><use href="#t" x="677" y="612"/><text x="677" y="602">Hickory</text><use href="#t" x="890" y="630"/><text x="890" y="621">Salisbury</text><use href="#t" x="1050" y="619"/><text x="1050" y="652">Asheboro</text><use href="#t" x="381" y="654"/><text x="381" y="684">Asheville</text><use href="#t" x="863" y="711"/><text x="863" y="699">Concord</text><use href="#t" x="715" y="753"/><text x="716" y="743">Gastonia</text><use href="#c" x="798" y="764"/><text class="b" x="800" y="802">Charlotte</text><use href="#t" x="756" y="855"/><text x="755" y="844">Rock Hill</text><use href="#t" x="871" y="836"/><text x="932" y="846">Monroe</text><use href="#t" x="419" y="877"/><text x="419" y="866">Greenville</text><use href="#t" x="454" y="911"/><text x="454" y="942">Simpsonville</text><use href="#t" x="357" y="978"/><text x="357" y="1010">Anderson</text><use href="#t" x="69" y="1041"/><text x="69" y="1030">Gainesville</text><use href="#t" x="476" y="1070"/><use href="#t" x="1061" y="1070"/></g>
<g class="lbl" transform="translate(1511 280) scale(.33333)"><use href="#t" x="131" y="100"/><text x="131" y="90">Lynchburg</text><use href="#c" x="550" y="62"/><text class="b" x="549" y="100">Richmond</text><use href="#t" x="558" y="157"/><text x="558" y="189">Petersburg</text><use href="#t" x="795" y="235"/><text x="795" y="192">Newport</text><text x="795" y="224">News</text><use href="#c" x="904" y="272"/><text class="b" x="905" y="311">Virginia Beach</text><use href="#t" x="756" y="311"/><text x="703" y="321">Suffolk</text><use href="#t" x="72" y="353"/><text x="71" y="343">Danville</text><use href="#t" x="494" y="394"/><text x="495" y="424">Roanoke</text><text x="495" y="456">Rapids</text><use href="#t" x="845" y="441"/><text x="844" y="400">Elizabeth</text><text x="844" y="432">City</text><use href="#t" x="191" y="533"/><text x="191" y="522">Durham</text><use href="#c" x="255" y="597"/><text class="b" x="255" y="585">Raleigh</text><use href="#t" x="461" y="549"/><text x="461" y="582">Rocky</text><text x="461" y="613">Mount</text><use href="#t" x="564" y="648"/><text x="564" y="680">Greenville</text><use href="#t" x="123" y="688"/><text x="123" y="678">Sanford</text><use href="#t" x="412" y="715"/><text x="412" y="707">Goldsboro</text><use href="#t" x="513" y="753"/><text x="513" y="783">Kinston</text><text class="st" x="236" y="788">North Carolina</text><use href="#t" x="195" y="815"/><text x="196" y="848">Fayetteville</text><use href="#t" x="645" y="799"/><text x="645" y="829">New Bern</text><use href="#t" x="552" y="906"/><text x="552" y="896">Jacksonville</text><text class="sw" x="942" y="720">Pamlico</text><text class="sw" x="942" y="752">Sound</text><use href="#t" x="424" y="1062"/><text x="424" y="1051">Wilmington</text></g>

<!-- Search radius and station markers -->
<g transform="translate(770 280) scale(.33333)">
<circle cx="587" cy="568" r="536" fill="#333" fill-opacity=".17" stroke="#333" stroke-opacity=".85" stroke-width="2.7"/>
<use href="#s" x="240" y="357"/><use href="#s" x="87" y="459"/><use href="#s" x="171" y="442"/><use href="#s" x="253" y="424"/><use href="#s" x="240" y="531"/><use href="#s" x="110" y="711"/><use href="#s" x="249" y="664"/><use href="#s" x="354" y="304"/><use href="#s" x="380" y="357"/><use href="#s" x="407" y="426"/><use href="#s" x="597" y="316"/><use href="#s" x="576" y="424"/><use href="#s" x="466" y="472"/><use href="#s" x="586" y="480"/><use href="#s" x="657" y="504"/><use href="#s" x="691" y="382"/><use href="#s" x="810" y="295"/><use href="#s" x="891" y="453"/><use href="#s" x="970" y="283"/><use href="#s" x="1038" y="304"/><use href="#s" x="1102" y="520"/><use href="#s" x="1024" y="616"/><use href="#s" x="874" y="649"/><use href="#s" x="970" y="691"/><use href="#s" x="840" y="754"/><use href="#s" x="386" y="589"/><use href="#s" x="480" y="631"/><use href="#s" x="348" y="679"/><use href="#s" x="423" y="703"/><use href="#s" x="627" y="655"/><use href="#s" x="590" y="667"/><use href="#s" x="546" y="714"/><use href="#s" x="750" y="646"/><use href="#s" x="720" y="688"/><use href="#s" x="804" y="468"/>
<use href="#p" x="548" y="279"/><use href="#p" x="970" y="283"/><use href="#p" x="348" y="292"/><use href="#p" x="810" y="295"/><use href="#p" x="354" y="304"/><use href="#p" x="1038" y="304"/><use href="#p" x="226" y="310"/><use href="#p" x="471" y="313"/><use href="#p" x="597" y="316"/><use href="#p" x="519" y="321"/><use href="#p" x="762" y="346"/><use href="#p" x="380" y="357"/><use href="#p" x="240" y="357"/><use href="#p" x="520" y="374"/><use href="#p" x="541" y="381"/><use href="#p" x="691" y="382"/><use href="#p" x="494" y="408"/><use href="#p" x="351" y="409"/><use href="#p" x="858" y="409"/><use href="#p" x="799" y="423"/><use href="#p" x="576" y="424"/><use href="#p" x="512" y="424"/><use href="#p" x="253" y="424"/><use href="#p" x="407" y="426"/><use href="#p" x="360" y="427"/><use href="#p" x="337" y="433"/><use href="#p" x="171" y="442"/><use href="#p" x="891" y="453"/><use href="#p" x="87" y="459"/><use href="#p" x="804" y="468"/><use href="#p" x="466" y="472"/><use href="#p" x="586" y="480"/><use href="#p" x="1041" y="496"/><use href="#p" x="657" y="504"/><use href="#p" x="774" y="517"/><use href="#p" x="1102" y="520"/><use href="#p" x="240" y="531"/><use href="#p" x="559" y="547"/><use href="#p" x="957" y="555"/><use href="#p" x="732" y="555"/><use href="#p" x="93" y="562"/><use href="#p" x="190" y="562"/><use href="#p" x="834" y="565"/><use href="#p" x="413" y="565"/><use href="#p" x="874" y="579"/><use href="#p" x="159" y="580"/><use href="#p" x="973" y="588"/><use href="#p" x="386" y="589"/><use href="#p" x="914" y="612"/><use href="#p" x="566" y="612"/><use href="#p" x="1024" y="616"/><use href="#p" x="480" y="631"/><use href="#p" x="750" y="646"/><use href="#p" x="874" y="649"/><use href="#p" x="627" y="655"/><use href="#p" x="249" y="664"/><use href="#p" x="590" y="667"/><use href="#p" x="348" y="679"/><use href="#p" x="720" y="684"/><use href="#p" x="711" y="689"/><use href="#p" x="970" y="691"/><use href="#p" x="697" y="697"/><use href="#p" x="423" y="703"/><use href="#p" x="110" y="711"/><use href="#p" x="546" y="714"/><use href="#p" x="840" y="754"/>
</g>
</svg>
  <div class="zoom"><a href="#"><span>+</span></a><a href="#"><span>−</span></a></div>
  <div class="credit"><svg width="13" height="9" viewBox="0 0 13 9"><path fill="#4c7be1" d="M0 0h13v5H0z"/><path fill="#ffd500" d="M0 4h13v5H0z"/></svg><a href="#">Leaflet</a><span>|</span><span>©</span><a href="#">OpenStreetMap</a></div>
</div>
<hr class="rule">
<table class="stations">
  <thead><tr><th class="c1">Station Id</th><th class="c2">Temperature</th><th class="c3">Latitude</th><th class="c4">Longitude</th><th>Distance</th></tr></thead>
  <tbody>
  <tr><td>AHNT1</td><td>82.0</td><td>35.4678</td><td>-84.5856</td><td>103.474</td></tr>
  <tr><td>BETT1</td><td>78.0</td><td>36.4642</td><td>-86.3278</td><td>42.568</td></tr>
  <tr><td>BFDT1</td><td>82.0</td><td>36.1083</td><td>-86.6833</td><td>25.1366</td></tr>
  <tr><td>CAMT1</td><td>85.0</td><td>36.0517</td><td>-88.0819</td><td>96.8859</td></tr>
  <tr><td>CELT1</td><td>71.0</td><td>36.54</td><td>-85.4589</td><td>69.6384</td></tr>
  </tbody>
</table>
<div class="scrollbar"></div>
</body>
</html>
```
FILE: styles.css
```css
* { box-sizing: border-box; }
body {
  margin: 0;
  padding: 0 18px 0 9px;
  height: 100vh;
  overflow: hidden;
  background: #11191f;
  color: #bbc6ce;
  font-family: "Noto Sans", "Open Sans", sans-serif;
  font-size: 18px;
  line-height: 27px;
}
a { color: #1095c1; text-decoration: none; }
.nav { display: flex; justify-content: space-between; padding-top: 37px; letter-spacing: -0.58px; }
.brand { font-weight: 700; white-space: nowrap; letter-spacing: -0.67px; }
.links { display: flex; gap: 18px; margin: 0; padding: 0; list-style: none; white-space: nowrap; }
.title { margin: 22px 0 0; font-size: 36px; line-height: 46px; letter-spacing: -1.75px; color: #edf0f3; }
.subtitle { margin: 61px 0 0; font-size: 31.5px; line-height: 42px; letter-spacing: -0.3px; color: #e1e6eb; white-space: nowrap; }
.map { position: relative; margin-top: 47px; height: 358px; overflow: hidden; background: #f2efe9; }
.tiles { display: block; }
.green { fill: #bddab1; }
.pale { fill: #dcebc8; opacity: .75; }
.lake { fill: #aad3df; }
.river { fill: none; stroke: #c3dfe6; stroke-width: 2; }
.border { fill: none; stroke: #c9b9c9; stroke-width: 3.6; stroke-linejoin: round; }
.sea { fill: none; stroke: #8f8fb4; stroke-linejoin: round; }
.missriver { fill: none; stroke: #a9b0cb; stroke-width: 4.5; stroke-linejoin: round; }
.trunk { fill: none; stroke: #faa58e; stroke-width: 3; stroke-linejoin: round; }
.mway { fill: none; stroke: #e66e8f; stroke-width: 3.8; stroke-linejoin: round; }
.lbl text {
  font-family: "Noto Sans", sans-serif;
  font-size: 27px;
  text-anchor: middle;
  fill: #333;
  stroke: rgba(255, 255, 255, .65);
  stroke-width: 5px;
  stroke-linejoin: round;
  paint-order: stroke;
}
.lbl text.b { font-size: 31.5px; }
.lbl text.st { font-style: italic; fill: #8d6f95; font-size: 28px; }
.lbl text.sw { font-style: italic; fill: #5d8fc4; stroke: none; }
.zoom { position: absolute; left: 10px; top: 10px; width: 38px; border-radius: 4px; background: #c8c8c8; }
.zoom a {
  display: flex;
  justify-content: flex-end;
  align-items: flex-end;
  height: 29px;
  padding-right: 5px;
  border: 1px solid #1095c1;
  border-radius: 4px;
  background: #fff;
  color: #000;
  font: bold 21px/18px "Liberation Sans", Arial, sans-serif;
}
.zoom span { position: relative; top: 9.5px; z-index: 1; }
.credit {
  position: absolute;
  right: 0;
  bottom: 0;
  display: flex;
  align-items: center;
  gap: 4px;
  height: 19px;
  padding: 0 4px;
  background: rgba(255, 255, 255, .8);
  color: #333;
  font: 12.8px/19px "Liberation Sans", Arial, sans-serif;
}
.credit a { color: #0078a8; }
.rule { height: 1px; margin: 36px 0; border: 0; background: #1f2d38; }
.stations { width: 100%; table-layout: fixed; border-collapse: separate; border-spacing: 0; }
.stations th { height: 42px; padding: 2px 18px 0; font-size: 18px; font-weight: 400; text-align: left; letter-spacing: -0.75px; }
.stations td { height: 39.8px; padding: 2px 18px 0; font-size: 15.75px; line-height: 24px; letter-spacing: -0.55px; }
.stations tr:last-child td { padding-top: 1px; }
.stations th, .stations td { border-bottom: 1px solid #1f2d38; }
.stations thead th, .stations tbody tr:nth-child(even) td { background: #171f24; }
.stations .c1 { width: 370.5px; }
.stations .c2 { width: 450.5px; }
.stations .c3 { width: 333px; }
.stations .c4 { width: 386px; }
.scrollbar { position: fixed; top: 12px; right: 3px; width: 2px; height: 248px; background: #9f9f9f; }
```
